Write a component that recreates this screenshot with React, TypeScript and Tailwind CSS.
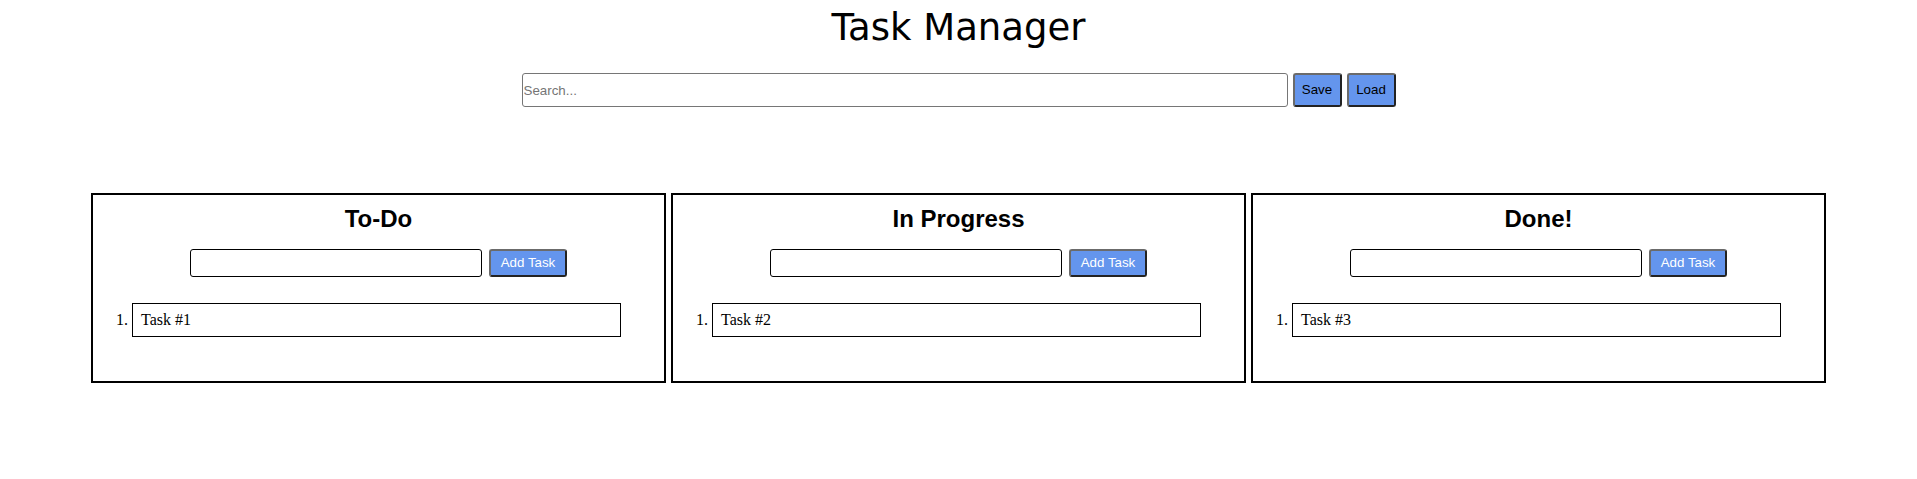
import { useState } from "react";

type Column = { id: string; title: string; tasks: string[] };

const initialColumns: Column[] = [
  { id: "todo", title: "To-Do", tasks: ["Task #1"] },
  { id: "progress", title: "In Progress", tasks: ["Task #2"] },
  { id: "done", title: "Done!", tasks: ["Task #3"] },
];

function TaskColumn({
  column,
  onAdd,
}: {
  column: Column;
  onAdd: (text: string) => void;
}) {
  const [draft, setDraft] = useState("");

  return (
    <div className="w-[575px] h-[190px] border-2 border-black bg-white">
      <h2 className="mt-[10px] text-center text-[24px] leading-[28px] font-bold font-['Liberation_Sans',Arial,sans-serif] text-black">
        {column.title}
      </h2>
      <div className="mt-[16px] flex justify-center gap-[7px]">
        <input
          value={draft}
          onChange={(e) => setDraft(e.target.value)}
          className="w-[292px] h-[28px] px-[2px] border border-black rounded-[3px] text-[13.33px] font-['Liberation_Sans',Arial,sans-serif] outline-none"
        />
        <button
          onClick={() => {
            if (draft.trim()) {
              onAdd(draft.trim());
              setDraft("");
            }
          }}
          className="w-[78px] h-[28px] bg-[#6495ed] text-white text-[13.33px] font-['Liberation_Sans',Arial,sans-serif] rounded-[3px] border-2 border-t-[#6b6b6b] border-l-[#6b6b6b] border-r-[#232323] border-b-[#232323]"
        >
          Add Task
        </button>
      </div>
      <ol className="mt-[26px] pl-[39px] list-decimal text-[16px]">
        {column.tasks.map((task, i) => (
          <li
            key={i}
            className="w-[489px] h-[34px] border border-black pl-[8px] leading-[32px]"
          >
            {task}
          </li>
        ))}
      </ol>
    </div>
  );
}

export default function App() {
  const [columns, setColumns] = useState<Column[]>(initialColumns);
  const [search, setSearch] = useState("");

  const addTask = (id: string, text: string) => {
    setColumns((cols) =>
      cols.map((c) => (c.id === id ? { ...c, tasks: [...c.tasks, text] } : c))
    );
  };

  return (
    <div className="min-h-screen bg-white text-black font-['Liberation_Serif','Times_New_Roman',serif]">
      {/* Header */}
      <h1 className="pt-[6px] text-center text-[37px] leading-[43px] font-normal font-['DejaVu_Sans',Verdana,sans-serif]">
        Task Manager
      </h1>

      {/* Search bar */}
      <div className="mt-[24px] flex justify-center gap-[5px]">
        <input
          value={search}
          onChange={(e) => setSearch(e.target.value)}
          placeholder="Search..."
          className="w-[766px] h-[34px] px-[1px] border border-[#767676] rounded-[3px] text-[13.33px] font-['Liberation_Sans',Arial,sans-serif] placeholder:text-[#757575] outline-none"
        />
        <button className="w-[49px] h-[34px] bg-[#6495ed] text-black text-[13.33px] font-['Liberation_Sans',Arial,sans-serif] rounded-[3px] border-2 border-t-[#6b6b6b] border-l-[#6b6b6b] border-r-[#232323] border-b-[#232323]">
          Save
        </button>
        <button className="w-[49px] h-[34px] bg-[#6495ed] text-black text-[13.33px] font-['Liberation_Sans',Arial,sans-serif] rounded-[3px] border-2 border-t-[#6b6b6b] border-l-[#6b6b6b] border-r-[#232323] border-b-[#232323]">
          Load
        </button>
      </div>

      {/* Columns */}
      <div className="mt-[86px] flex justify-center gap-[5px]">
        {columns.map((col) => (
          <TaskColumn
            key={col.id}
            column={col}
            onAdd={(text) => addTask(col.id, text)}
          />
        ))}
      </div>
    </div>
  );
}
